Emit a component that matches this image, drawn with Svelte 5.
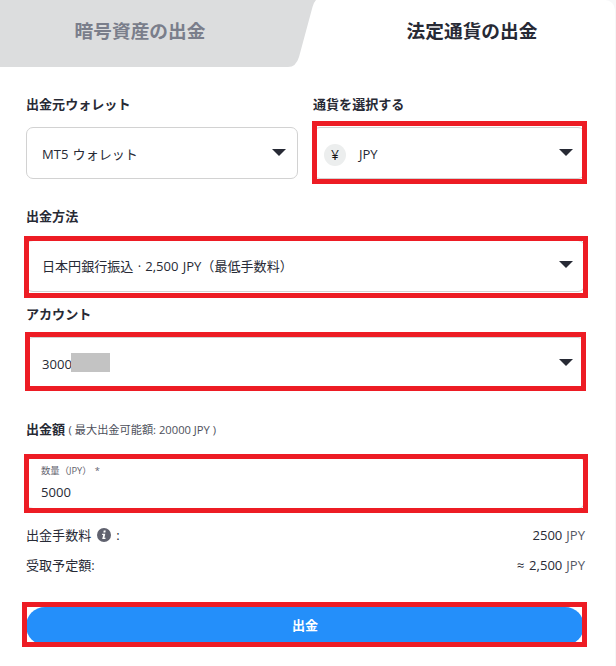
<script>
  let currency = 'JPY';
  let amount = 5000;
  let fee = 2500;
  let maxAmount = 20000;

  $: received = fee.toLocaleString('en-US');
</script>

<style>
  :global(body) {
    background: #f7f7f8;
  }

  .card {
    box-sizing: border-box;
    width: 615px;
    height: 666px;
    overflow: hidden;
    background: #fff;
    border-radius: 0 10px 0 0;
    font-family: "Open Sans", "Noto Sans CJK JP", sans-serif;
    font-size: 13.07px;
    line-height: 20px;
    color: #272a35;
  }

  .tabs {
    position: relative;
    display: grid;
    grid-template-columns: 280px 1fr;
    height: 67px;
  }

  .tab-shape {
    position: absolute;
    top: 0;
    left: 0;
  }

  .tab {
    position: relative;
    padding: 0 0 5px;
    border: 0;
    background: transparent;
    font: bold 18.7px/28px "Open Sans", "Noto Sans CJK JP", sans-serif;
    text-align: center;
    color: #7a7e8b;
  }

  .tab.active {
    margin-left: 49px;
    color: #272a35;
  }

  form {
    display: flex;
    flex-direction: column;
    padding: 27px 30px 0 26px;
  }

  .row {
    display: grid;
    grid-template-columns: 272px 272px;
    justify-content: space-between;
    margin-bottom: 27px;
  }

  .label {
    font-weight: bold;
  }

  .label small {
    font-size: 11.2px;
    font-weight: normal;
    color: #4d505b;
  }

  .field {
    position: relative;
    box-sizing: border-box;
    display: flex;
    align-items: center;
    height: 52px;
    margin-top: 13px;
    padding: 2px 11px 0 15px;
    border: 1px solid #d2d2d2;
    border-radius: 7px;
    word-spacing: .8px;
  }

  .arrow {
    width: 14px;
    height: 7px;
    margin: -3px 0 0 auto;
    fill: #272a35;
  }

  .coin {
    width: 22px;
    height: 22px;
    margin: 1px 13px 0 -5px;
    border-radius: 50%;
    background: #eceeee;
    font-size: 14px;
    text-align: center;
    line-height: 22px;
    color: #111;
  }

  .mask {
    width: 39px;
    height: 19px;
    margin: -4px 0 0 -1px;
    background: #c3c3c3;
  }

  .mark {
    position: absolute;
    border: 5px solid #ed1c24;
    pointer-events: none;
  }

  .mark-currency { inset: -7px -3px -6px -2px; }
  .mark-method { inset: -5px -4px -7px -3px; }
  .mark-account { inset: -6px -2px -3px -2px; }
  .mark-amount { inset: -4px -4px -5px -3px; }
  .mark-submit { inset: -5px -2px -2px -4px; }

  .method {
    margin-top: 14px;
    margin-bottom: 12px;
    padding-top: 0;
  }

  .method .arrow {
    margin-top: -4px;
  }

  .account {
    margin-bottom: 30px;
  }

  .amount {
    flex-direction: column;
    align-items: flex-start;
    margin-top: 17px;
    margin-bottom: 16px;
    padding: 6px 14px 0;
  }

  .amount small {
    font-size: 9.33px;
    line-height: 14px;
    color: #5f626d;
  }

  .amount span {
    margin-top: 4px;
  }

  .summary {
    display: flex;
    justify-content: space-between;
    margin-bottom: 10px;
  }

  .summary span {
    display: flex;
    align-items: center;
    word-spacing: 1.5px;
  }

  .summary em {
    margin-left: 4px;
    font-style: normal;
    color: #555965;
  }

  .info {
    width: 14px;
    height: 14px;
    margin: 0 5px 0 6px;
  }

  .action {
    position: relative;
    margin-top: 22px;
  }

  .action button {
    display: block;
    width: 558px;
    height: 38px;
    margin: 0;
    padding: 0 0 2px;
    border: 0;
    border-radius: 19px;
    background: #248ffa;
    font: bold 13.07px/20px "Open Sans", "Noto Sans CJK JP", sans-serif;
    color: #fff;
  }
</style>

<div class="card">
  <div class="tabs">
    <svg class="tab-shape" width="316" height="67" viewBox="0 0 316 67">
      <path d="M0 0H316Q314 2 312.5 7L299 57Q296 67 288 67H0Z" fill="#dcddde" />
    </svg>
    <button class="tab">暗号資産の出金</button>
    <button class="tab active">法定通貨の出金</button>
  </div>

  <form on:submit|preventDefault>
    <div class="row">
      <div>
        <div class="label">出金元ウォレット</div>
        <div class="field">
          MT5 ウォレット
          <svg class="arrow" viewBox="0 0 14 7"><path d="M0 0H14L7 7Z" /></svg>
        </div>
      </div>
      <div>
        <div class="label">通貨を選択する</div>
        <div class="field">
          <span class="coin">¥</span>
          {currency}
          <svg class="arrow" viewBox="0 0 14 7"><path d="M0 0H14L7 7Z" /></svg>
          <div class="mark mark-currency"></div>
        </div>
      </div>
    </div>

    <div class="label">出金方法</div>
    <div class="field method">
      日本円銀行振込 · 2,500 {currency}（最低手数料）
      <svg class="arrow" viewBox="0 0 14 7"><path d="M0 0H14L7 7Z" /></svg>
      <div class="mark mark-method"></div>
    </div>

    <div class="label">アカウント</div>
    <div class="field account">
      3000<span class="mask"></span>
      <svg class="arrow" viewBox="0 0 14 7"><path d="M0 0H14L7 7Z" /></svg>
      <div class="mark mark-account"></div>
    </div>

    <div class="label">出金額 <small>( 最大出金可能額: {maxAmount} {currency} )</small></div>
    <div class="field amount">
      <small>数量（{currency}） *</small>
      <span>{amount}</span>
      <div class="mark mark-amount"></div>
    </div>

    <div class="summary">
      <span>
        出金手数料
        <svg class="info" viewBox="0 0 14 14">
          <circle cx="7" cy="7" r="7" fill="#60626f" />
          <path d="M6.7 2.6H8.7L8.4 4.4H6.4ZM5.2 5.7H8.3L7.4 9.8H8.6L8.4 11H5.2L6.2 6.9H5Z" fill="#fff" />
        </svg>
        :
      </span>
      <span>{fee} <em>{currency}</em></span>
    </div>
    <div class="summary">
      <span>受取予定額:</span>
      <span>≈ {received} <em>{currency}</em></span>
    </div>

    <div class="action">
      <button>出金</button>
      <div class="mark mark-submit"></div>
    </div>
  </form>
</div>
